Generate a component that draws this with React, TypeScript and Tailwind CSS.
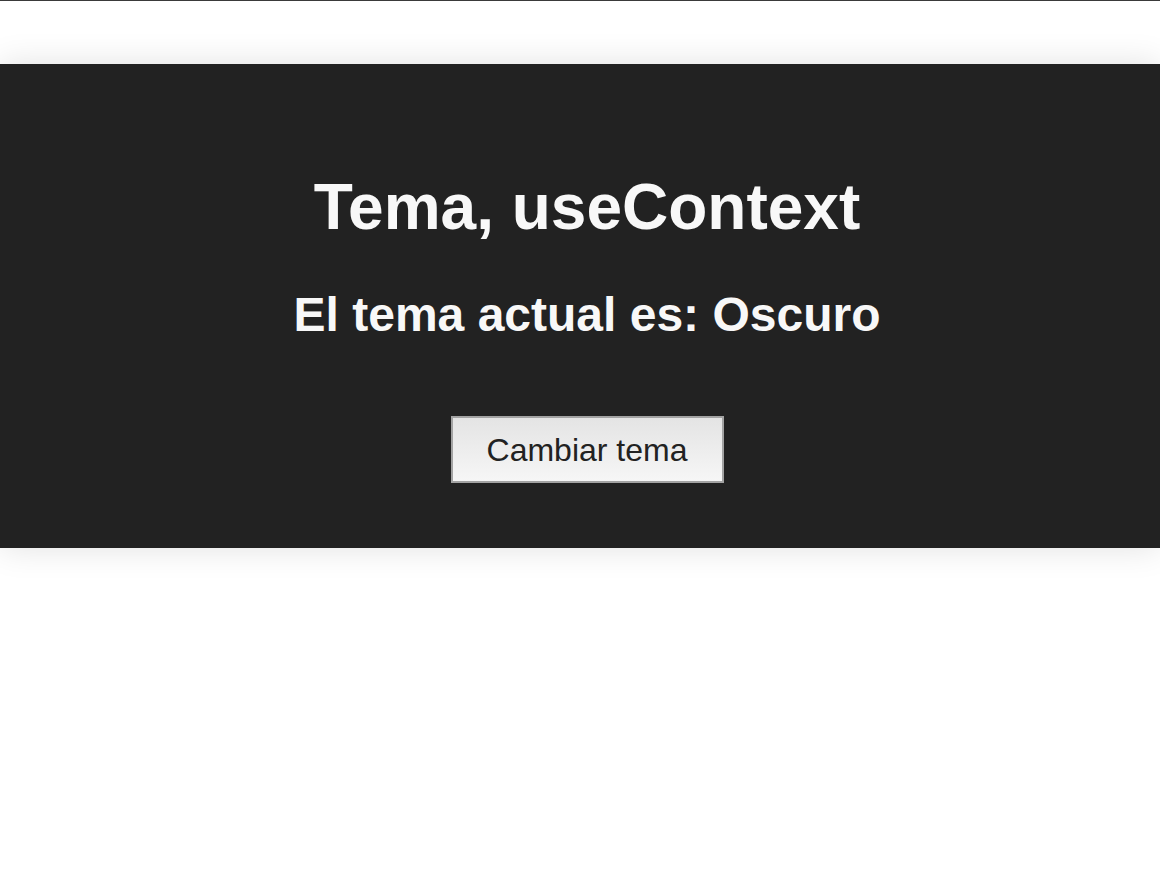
const App = () => {
  return (
    <div className="min-h-[878px] bg-white border-t border-[#3a3a3a] font-['Liberation_Sans',Arial,sans-serif]">
      <div className="mt-[63px] bg-[#222222] shadow-[0_0_32px_rgba(0,0,0,0.12)] pt-[111px] pb-[65px] pl-[14px] flex flex-col items-center">
        <h1 className="text-[64px] leading-none font-bold text-[#f8f8f8] mb-[52px]">
          Tema, useContext
        </h1>
        <h2 className="text-[48px] leading-none font-bold text-[#f8f8f8] mb-[77px]">
          El tema actual es: Oscuro
        </h2>
        <button className="w-[273px] h-[67px] border-2 border-[#a3a3a3] bg-gradient-to-b from-[#e4e4e4] to-[#f6f6f6] text-[#222] text-[32px] leading-none">
          Cambiar tema
        </button>
      </div>
    </div>
  );
};

export default App;
